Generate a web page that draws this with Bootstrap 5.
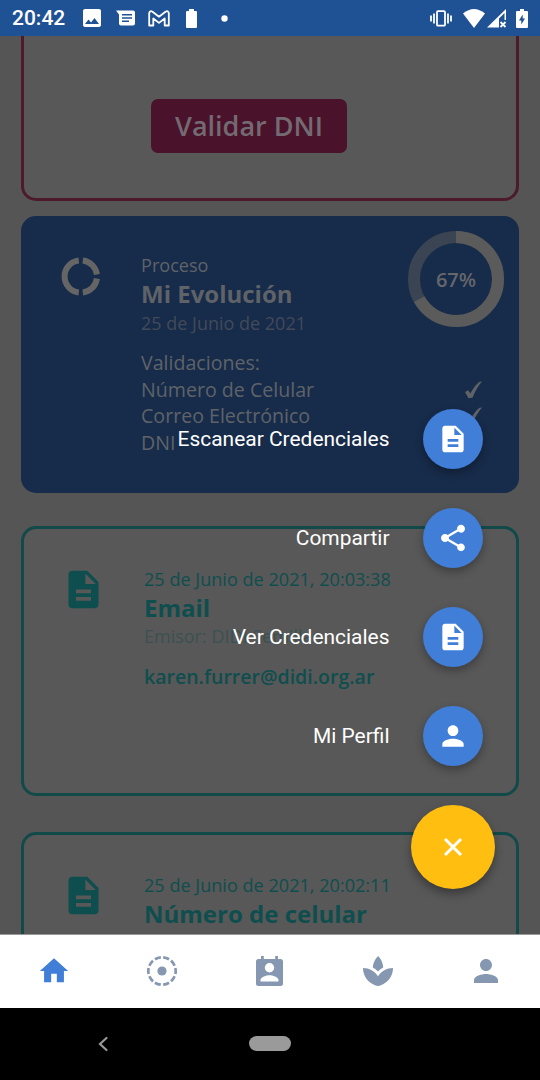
<!DOCTYPE html>
<html lang="es">
<head>
<meta charset="utf-8">
<meta name="viewport" content="width=device-width, initial-scale=1">
<title>Inicio</title>
<link href="https://cdn.jsdelivr.net/npm/bootstrap@5.3.0/dist/css/bootstrap.min.css" rel="stylesheet">
<style>
body{font-family:"Open Sans",sans-serif;background:#555;overflow:hidden}
.screen{width:540px;height:1080px}
.status{height:36px;background:#1f5195;font:500 21px/36px Roboto,sans-serif;padding:0 12px 0 12px}
.status svg{display:block;flex:none}
.feed{height:898px;padding:0 21px;overflow:hidden;background:#555}
.tile{border-radius:15px;border:3px solid;background:#585858;flex:none}
.tile-dni{height:165px;border-color:#4d1a2c;border-top:0;border-radius:0 0 15px 15px;padding-top:63px;padding-left:127px}
.btn-dni{width:196px;height:54px;border-radius:7px;background:#4a122b;color:#736a72;font-weight:600;font-size:27px;line-height:54px;padding:0;border:0}
.tile-proc{height:277px;margin-top:15px;border:0;background:#172b4a;color:#5f6368;padding:36px 35px 0 38px}
.tile-cred{height:270px;border-color:#124a4a;color:#0f4e4e;padding:36.5px 20px 0 37px}
.lead-icon{width:45px;height:45px;flex:none}
.l-date{font-size:18.1px;line-height:27px}
.l-title{font-size:24px;line-height:30px;font-weight:700}
.l-sub{font-size:18px;line-height:28px}
.l-row{font-size:19.6px;line-height:26.6px}
.l-mail{font-size:19.55px;line-height:27px;font-weight:600;margin-top:14px}
.faint{color:#424a59}.faint-teal{color:#3b5151}
.donut{right:15px;top:15px;width:96px;height:96px}
.donut span{font-size:20px;font-weight:600;color:#65676a;padding-top:2px}
.dial{right:45px;top:409px;font-family:Roboto,sans-serif;font-size:20.95px;color:#fff}
.dial .item{height:60px;gap:33.5px}
.dial .item span{padding-top:1px}
.fab{width:60px;height:60px;background:#407ed8;box-shadow:0 4px 8px rgba(0,0,0,.3)}
.fab-close{width:84px;height:84px;background:#ffbe10;box-shadow:0 5px 10px rgba(0,0,0,.35)}
.tabs{height:74px;background:#fff;border-top:1px solid #999;color:#8698b1;padding-bottom:2px}
.tabs .on{color:#407ed8}
.sys{height:72px;background:#000;padding-bottom:1px}
.pill{width:42px;height:15px;background:#9a9a9a}
</style>
</head>
<body>
<svg width="0" height="0" class="d-none">
<symbol id="doc" viewBox="0 0 24 24"><path fill="currentColor" d="M14 2H6c-1.100 0-2 .9-2 2v16c0 1.100.9 2 2 2h12c1.100 0 2-.9 2-2V8l-6-6zm2 16H8v-2h8v2zm0-4H8v-2h8v2zm-3-5V3.500L18.500 9H13z"/></symbol>
<symbol id="person" viewBox="0 0 24 24"><path fill="currentColor" d="M12 12c2.210 0 4-1.790 4-4s-1.790-4-4-4-4 1.790-4 4 1.790 4 4 4zm0 2c-2.670 0-8 1.340-8 4v2h16v-2c0-2.660-5.330-4-8-4z"/></symbol>
<symbol id="check" viewBox="0 0 18 20"><path fill="currentColor" d="M1 12 4.200 10.200 6.300 13.500C9 8.500 12 4.500 15.500 1.700L18 1.500C14 6 11 11.500 8.500 17.700L4.500 18.200Z"/></symbol>
</svg>
<div class="screen position-relative d-flex flex-column">
  <header class="status d-flex align-items-center text-white">
    <span style="width:71px">20:42</span>
    <svg width="18" height="18" viewBox="3 3 18 18"><path fill="#fff" d="M21 19V5c0-1.100-.9-2-2-2H5c-1.100 0-2 .9-2 2v14c0 1.100.9 2 2 2h14c1.100 0 2-.9 2-2zM8.500 13.500l2.500 3.010L14.500 12l4.500 6H5l3.500-4.500z"/></svg>
    <svg style="margin-left:15px" width="19" height="16" viewBox="0 0 19 15"><path fill="#fff" fill-rule="evenodd" d="M0 0h17a2 2 0 0 1 2 2v11a2 2 0 0 1-2 2H5a2 2 0 0 1-2-2V4zM6 3.500v1.500h10V3.500zM6 6.800v1.500h10V6.800zM6 10v1.500h7V10z"/></svg>
    <svg style="margin-left:12.500px" width="22" height="17" viewBox="0 0 22 17"><path fill="none" stroke="#fff" stroke-width="1.800" stroke-linejoin="round" d="M1.200 15.500V3Q2 .3 4.500 1.700L11 6.700 17.500 1.700Q20 .3 20.800 3V15.500H16.700V8.500L11 12.900 5.300 8.500V15.500Z"/></svg>
    <svg style="margin-left:16.500px" width="11" height="19" viewBox="0 0 11 19"><path fill="#fff" d="M3 0h5v2h2q1 0 1 1v15q0 1-1 1H1q-1 0-1-1V3q0-1 1-1h2z"/></svg>
    <svg style="margin-left:24px" width="7" height="7"><circle cx="3.500" cy="3.500" r="3.200" fill="#fff"/></svg>
    <svg class="ms-auto" width="22" height="17" viewBox="0 0 22 17"><g fill="none" stroke="#fff" stroke-width="1.800"><rect x="7" y="1.200" width="8" height="14.500" rx="1"/><path d="M4 3.500v10M1 5.500v6M18 3.500v10M21 5.500v6"/></g></svg>
    <svg style="margin-left:11px" width="22" height="19" viewBox="0 0 22 19"><path fill="#fff" d="M11 19 0 4.500Q11-4.500 22 4.500Z"/></svg>
    <svg style="margin-left:2px" width="20" height="19" viewBox="0 0 20 19"><path fill="#fff" d="M0 18.500 19 0v11h-1.500V4L12 9.500v9z"/><path stroke="#fff" stroke-width="1.800" d="m13.500 13 5 5m0-5-5 5"/></svg>
    <svg style="margin-left:9px" width="12" height="19" viewBox="0 0 12 19"><path fill="#fff" fill-rule="evenodd" d="M4 0h4v2h3q1 0 1 1v15q0 1-1 1H1q-1 0-1-1V3q0-1 1-1h3zM6.700 5.500 3 11.500H5.300V15.500L9 9.500H6.700z"/></svg>
  </header>

  <main class="feed d-flex flex-column">
    <section class="tile tile-dni"><button class="btn btn-dni">Validar DNI</button></section>
    <section class="tile tile-proc position-relative d-flex">
      <svg class="lead-icon" style="margin-top:1.500px" viewBox="0 0 45 45"><g fill="none" stroke="#656565" stroke-width="6"><path d="M19.800 6.600A16 16 0 0 0 19.800 38.400M23.800 6.600A16 16 0 0 1 37.900 20.500M37.900 24.500A16 16 0 0 1 23.800 38.400"/></g></svg>
      <div class="flex-grow-1" style="margin-left:37px">
        <div class="l-date">Proceso</div>
        <div class="l-title">Mi Evolución</div>
        <div class="l-sub faint">25 de Junio de 2021</div>
        <div class="l-row" style="margin-top:13px">Validaciones:</div>
        <div class="l-row d-flex justify-content-between align-items-center">Número de Celular <svg style="margin-right:2px" width="18" height="20"><use href="#check"/></svg></div>
        <div class="l-row d-flex justify-content-between align-items-center">Correo Electrónico <svg style="margin-right:2px" width="18" height="20"><use href="#check"/></svg></div>
        <div class="l-row">DNI</div>
      </div>
      <div class="donut position-absolute d-flex align-items-center justify-content-center">
        <svg class="position-absolute" width="96" height="96" viewBox="0 0 96 96"><g fill="none" stroke-width="12"><circle cx="48" cy="48" r="42" stroke="#3a4452"/><circle cx="48" cy="48" r="42" stroke="#5b5b5b" pathLength="100" stroke-dasharray="67 33" transform="rotate(-90 48 48)"/></g></svg>
        <span>67%</span>
      </div>
    </section>
    <section class="tile tile-cred d-flex" style="margin-top:33px">
      <svg class="lead-icon" style="margin-top:1.500px"><use href="#doc"/></svg>
      <div style="margin-left:38px">
        <div class="l-date">25 de Junio de 2021, 20:03:38</div>
        <div class="l-title">Email</div>
        <div class="l-sub faint-teal" style="line-height:26px">Emisor: DIDI Semillas</div>
        <div class="l-mail">karen.furrer@didi.org.ar</div>
      </div>
    </section>
    <section class="tile tile-cred d-flex" style="margin-top:36px">
      <svg class="lead-icon" style="margin-top:1.500px"><use href="#doc"/></svg>
      <div style="margin-left:38px">
        <div class="l-date">25 de Junio de 2021, 20:02:11</div>
        <div class="l-title">Número de celular</div>
      </div>
    </section>
  </main>

  <nav class="tabs row g-0 text-center align-items-center">
    <div class="col on"><svg width="34" height="34" viewBox="0 0 24 24"><path fill="currentColor" d="M10 20v-6h4v6h5v-8h3L12 3 2 12h3v8z"/></svg></div>
    <div class="col"><svg width="34" height="34" viewBox="0 0 34 34"><circle cx="17" cy="17" r="4.600" fill="currentColor"/><circle cx="17" cy="17" r="13.700" fill="none" stroke="currentColor" stroke-width="2.700" pathLength="100" stroke-dasharray="7.200 2.800" transform="rotate(-85 17 17)"/></svg></div>
    <div class="col"><svg class="me-1" style="margin-left:3px" width="27" height="30" viewBox="0 0 27 30"><path fill="currentColor" fill-rule="evenodd" d="M5 0h2.800v3h11.400V0H22v3h2.500A2.500 2.500 0 0 1 27 5.500v22a2.500 2.500 0 0 1-2.500 2.500h-22A2.500 2.500 0 0 1 0 27.500v-22A2.500 2.500 0 0 1 2.500 3H5zM13.500 7a4.700 4.700 0 1 0 0 9.400 4.700 4.700 0 0 0 0-9.400zM4.500 25.500h18V24c0-3-6-4.800-9-4.800s-9 1.800-9 4.800z"/></svg></div>
    <div class="col"><svg width="36" height="36" viewBox="0 0 24 24"><path fill="currentColor" d="M15.490 9.630c-.18-2.790-1.310-5.510-3.430-7.630-2.140 2.140-3.320 4.860-3.550 7.630 1.280.68 2.460 1.560 3.490 2.630 1.030-1.060 2.210-1.940 3.490-2.630zM12 15.450C9.850 12.170 6.180 10 2 10c0 5.320 3.360 9.820 8.030 11.490.63.23 1.290.4 1.970.51.68-.12 1.330-.29 1.970-.51C18.640 19.820 22 15.320 22 10c-4.180 0-7.850 2.170-10 5.450z"/></svg></div>
    <div class="col"><svg width="36" height="36"><use href="#person"/></svg></div>
  </nav>
  <footer class="sys d-flex align-items-center">
    <svg style="margin-left:98px" width="11" height="16" viewBox="0 0 11 16"><path fill="none" stroke="#999" stroke-width="2.200" stroke-linecap="round" d="M8.500 2 2 8l6.500 6"/></svg>
    <div class="pill rounded-pill" style="margin-left:140px"></div>
  </footer>

  <div class="dial position-absolute d-flex flex-column align-items-end">
    <div class="d-flex flex-column align-items-end" style="gap:39px;margin-right:12px">
      <div class="item d-flex align-items-center"><span>Escanear Credenciales</span><div class="fab rounded-circle d-flex align-items-center justify-content-center"><svg width="32" height="32"><use href="#doc"/></svg></div></div>
      <div class="item d-flex align-items-center"><span>Compartir</span><div class="fab rounded-circle d-flex align-items-center justify-content-center"><svg width="32" height="32" viewBox="0 0 24 24"><path fill="#fff" d="M18 16.080c-.76 0-1.440.3-1.960.77L8.910 12.700c.05-.23.09-.46.09-.7s-.04-.47-.09-.7l7.050-4.110c.54.5 1.250.81 2.040.81 1.660 0 3-1.340 3-3s-1.340-3-3-3-3 1.340-3 3c0 .24.040.47.090.7L8.040 9.810C7.500 9.310 6.790 9 6 9c-1.660 0-3 1.340-3 3s1.340 3 3 3c.79 0 1.500-.31 2.040-.81l7.120 4.160c-.05.21-.08.43-.08.650 0 1.610 1.310 2.920 2.920 2.920s2.920-1.310 2.920-2.920-1.310-2.920-2.920-2.920z"/></svg></div></div>
      <div class="item d-flex align-items-center"><span>Ver Credenciales</span><div class="fab rounded-circle d-flex align-items-center justify-content-center"><svg width="32" height="32"><use href="#doc"/></svg></div></div>
      <div class="item d-flex align-items-center"><span>Mi Perfil</span><div class="fab rounded-circle d-flex align-items-center justify-content-center"><svg width="32" height="32"><use href="#person"/></svg></div></div>
    </div>
    <div class="fab-close rounded-circle d-flex align-items-center justify-content-center" style="margin-top:39px"><svg width="20" height="20" viewBox="0 0 20 20"><path stroke="#fff" stroke-width="3" d="m2 2 16 16M18 2 2 18"/></svg></div>
  </div>
</div>
<script src="https://cdn.jsdelivr.net/npm/bootstrap@5.3.0/dist/js/bootstrap.bundle.min.js"></script>
</body>
</html>
